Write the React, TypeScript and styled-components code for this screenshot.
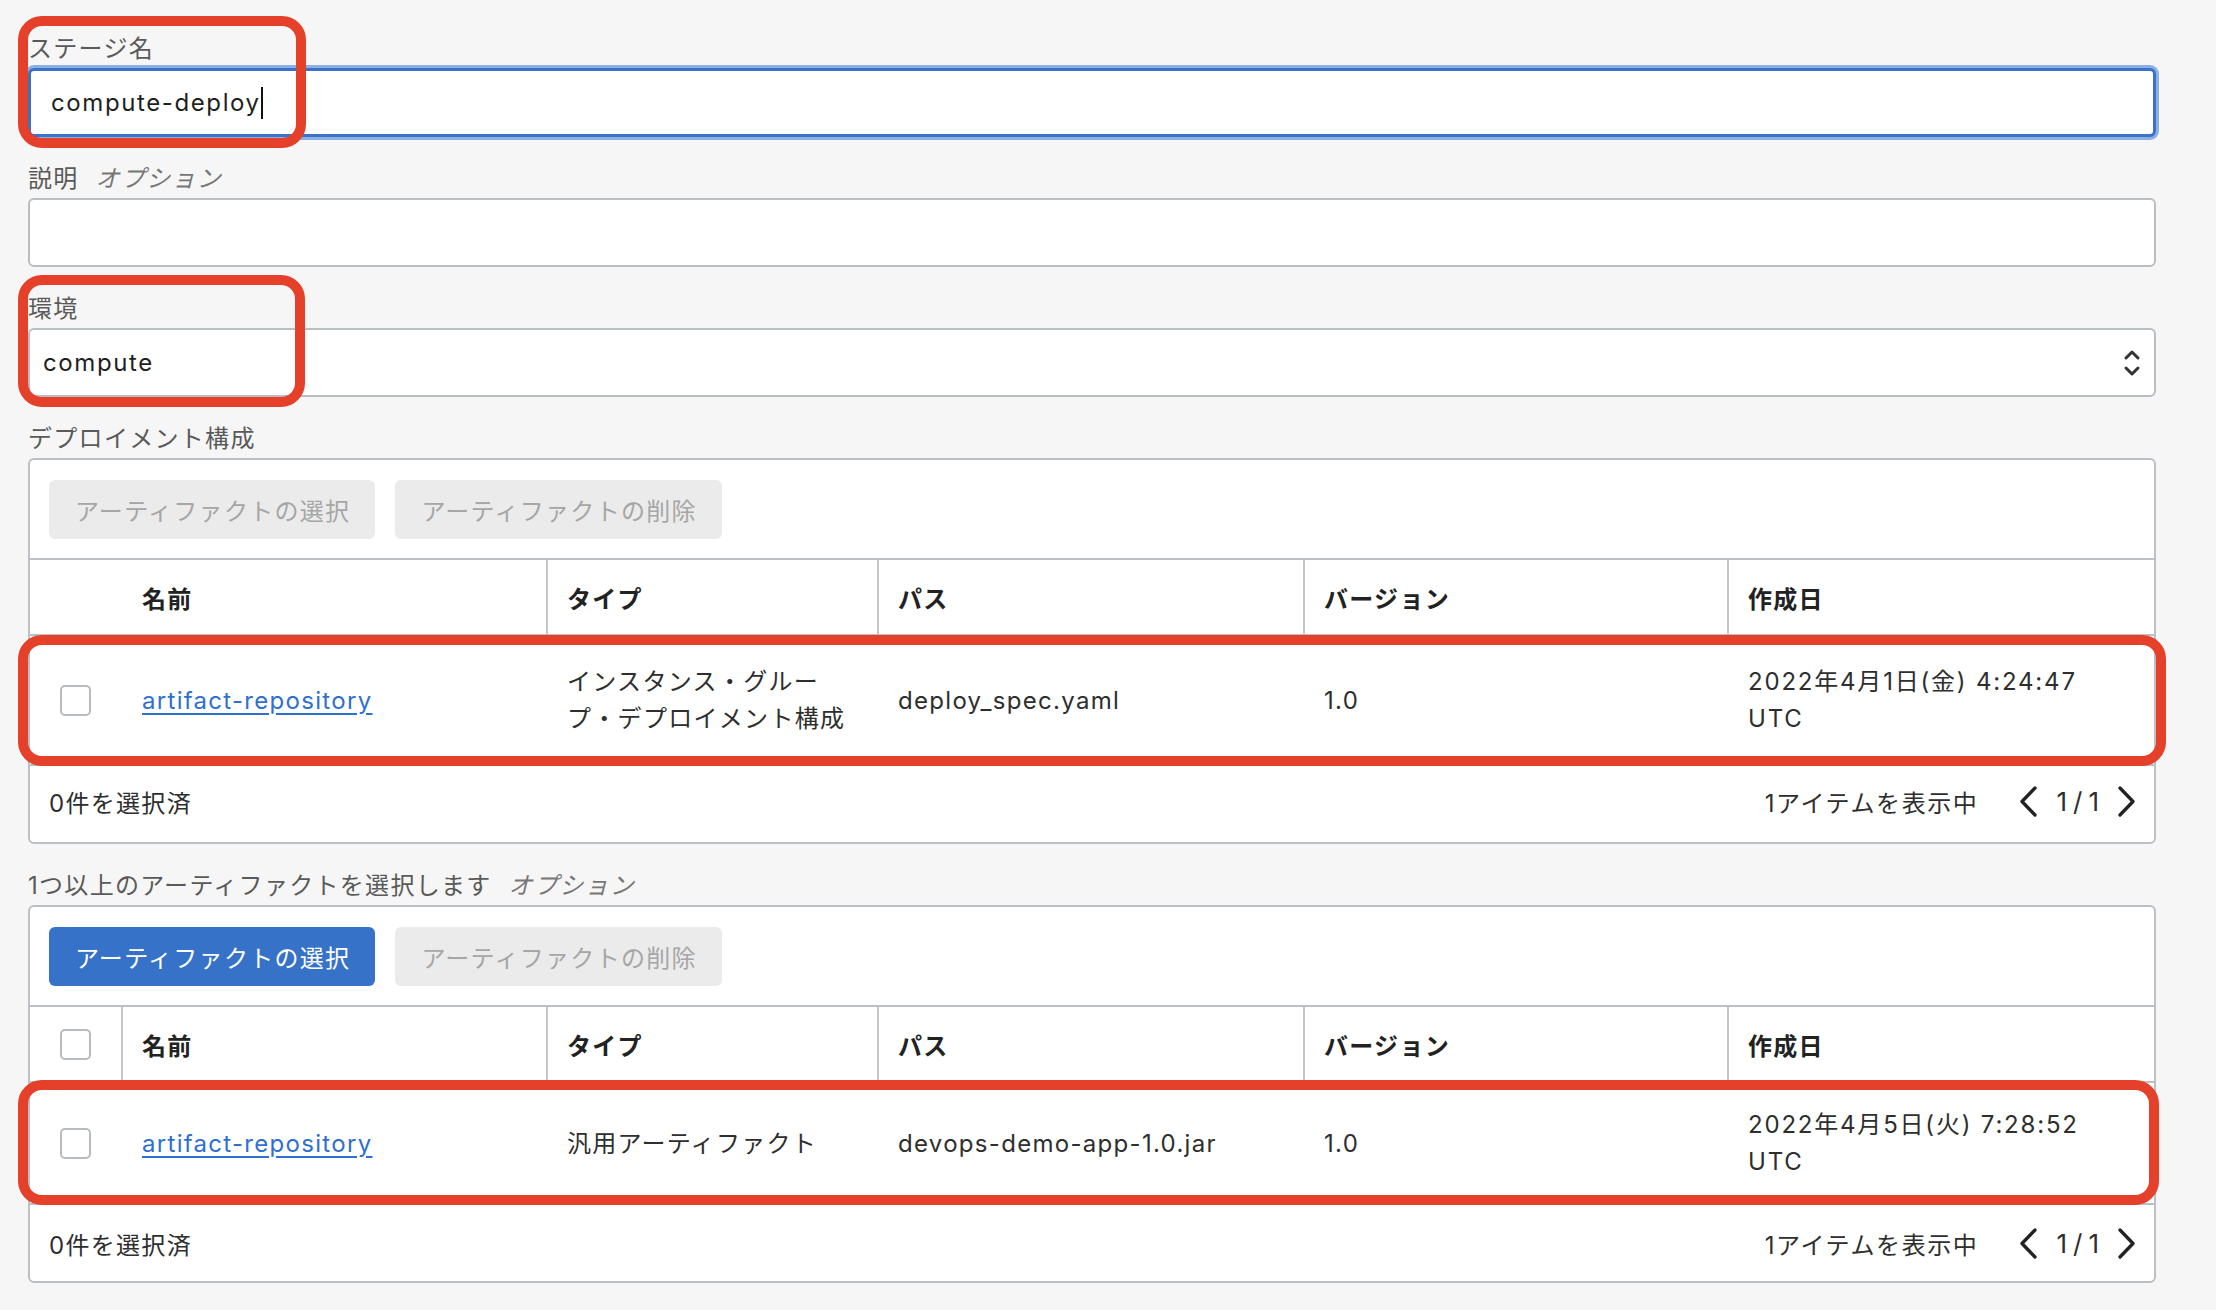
import React from "react";
import styled, { createGlobalStyle, css } from "styled-components";

const GlobalStyle = createGlobalStyle`
  html, body {
    margin: 0;
    padding: 0;
    background: #f6f6f6;
  }
  body {
    font-family: Inter, "Noto Sans CJK JP", "Noto Sans", sans-serif;
    color: #2b2b2b;
  }
  * { box-sizing: border-box; }
`;

const Page = styled.div`
  min-height: 1310px;
  padding: 34px 60px 0 28px;
  display: flex;
  flex-direction: column;
  gap: 27px;
  font-size: 24px;
  letter-spacing: 1.3px;
`;

const Field = styled.div`
  position: relative;
  display: flex;
  flex-direction: column;
  gap: 4px;
`;

const Label = styled.div`
  height: 30px;
  line-height: 30px;
  color: #5a5a5a;
  display: flex;
  gap: 17px;
  white-space: nowrap;
`;

const Optional = styled.span`
  font-style: italic;
  color: #777;
`;

const Control = styled.div<{ $focused?: boolean; $pad?: number }>`
  height: 69px;
  background: #fff;
  border: 2px solid #babec2;
  border-radius: 6px;
  display: flex;
  align-items: center;
  justify-content: space-between;
  padding: 0 12px 0 ${(p) => p.$pad ?? 19}px;
  color: #1f1f1f;
  ${(p) =>
    p.$focused &&
    css`
      border: 3px solid #3a72c9;
      box-shadow: 0 0 0 3px #8db0e4;
      padding-left: ${(p.$pad ?? 19) - 1}px;
    `}
`;

const Value = styled.span`
  display: inline-flex;
  align-items: center;
  letter-spacing: 1.6px;
`;

const Caret = styled.span`
  display: inline-block;
  width: 2px;
  height: 32px;
  background: #111;
`;

const Annotation = styled.div<{
  $top: number;
  $left: number;
  $right?: number;
  $bottom?: number;
  $width?: number;
  $height?: number;
}>`
  position: absolute;
  top: ${(p) => p.$top}px;
  left: ${(p) => p.$left}px;
  ${(p) => (p.$right !== undefined ? `right: ${p.$right}px;` : "")}
  ${(p) => (p.$bottom !== undefined ? `bottom: ${p.$bottom}px;` : "")}
  ${(p) => (p.$width !== undefined ? `width: ${p.$width}px;` : "")}
  ${(p) => (p.$height !== undefined ? `height: ${p.$height}px;` : "")}
  border: 10px solid #e5402a;
  border-radius: 24px;
  pointer-events: none;
  z-index: 2;
`;

const Card = styled.div`
  background: #fff;
  border: 2px solid #bcc0c4;
  border-radius: 6px;
`;

const Toolbar = styled.div`
  display: flex;
  gap: 20px;
  padding: 20px 19px 19px;
  border-bottom: 2px solid #bcc0c4;
`;

const Button = styled.button<{ $primary?: boolean }>`
  height: 59px;
  padding: 0 25px 0 26px;
  border: none;
  border-radius: 6px;
  font: inherit;
  letter-spacing: inherit;
  background: ${(p) => (p.$primary ? "#3672c8" : "#ebebeb")};
  color: ${(p) => (p.$primary ? "#ffffff" : "#a6a6a6")};
  cursor: ${(p) => (p.$primary ? "pointer" : "default")};
`;

const COLS = "91px 425px 331px 426px 424px 1fr";

const HeaderRow = styled.div`
  display: grid;
  grid-template-columns: ${COLS};
  height: 76px;
  border-bottom: 2px solid #bcc0c4;
`;

const HeadCell = styled.div<{ $divider?: boolean; $center?: boolean }>`
  display: flex;
  align-items: center;
  justify-content: ${(p) => (p.$center ? "center" : "flex-start")};
  padding: ${(p) => (p.$center ? "0" : "0 20px 0 21px")};
  font-weight: 700;
  color: #222;
  ${(p) => p.$divider && "box-shadow: inset 2px 0 0 #c3c6c9;"}
`;

const DataRow = styled.div<{ $height: number }>`
  position: relative;
  display: grid;
  grid-template-columns: ${COLS};
  height: ${(p) => p.$height}px;
  border-bottom: 2px solid #bcc0c4;
`;

const Cell = styled.div<{ $center?: boolean }>`
  display: flex;
  align-items: center;
  justify-content: ${(p) => (p.$center ? "center" : "flex-start")};
  padding: ${(p) => (p.$center ? "0" : "0 24px 0 21px")};
  line-height: 37px;
  color: #2e2e2e;
`;

const DateText = styled.span`
  max-width: 345px;
  letter-spacing: 1.8px;
`;

const Checkbox = styled.span`
  display: inline-block;
  width: 31px;
  height: 31px;
  border: 2px solid #b7bbbf;
  border-radius: 5px;
  background: #fff;
`;

const Link = styled.a`
  color: #2f6fd0;
  text-decoration: underline;
  text-underline-offset: 4px;
  text-decoration-thickness: 2px;
  cursor: pointer;
`;

const Footer = styled.div<{ $lift?: number }>`
  height: 76px;
  display: flex;
  align-items: center;
  justify-content: space-between;
  padding: 0 17px ${(p) => p.$lift ?? 0}px 19px;
  color: #2e2e2e;
`;

const Pager = styled.div`
  display: flex;
  align-items: center;
`;

const PagerText = styled.span`
  margin-right: 40px;
  letter-spacing: 1.6px;
`;

const PageNum = styled.span`
  margin: 0 12px 0 18px;
  font-size: 26px;
  letter-spacing: 6px;
`;

const Chevron = ({ dir }: { dir: "left" | "right" }) => (
  <svg width="20" height="31" viewBox="0 0 20 31" aria-hidden>
    <polyline
      points={dir === "left" ? "17,2 4,15.5 17,29" : "3,2 16,15.5 3,29"}
      fill="none"
      stroke="#222"
      strokeWidth="3.3"
      strokeLinecap="round"
      strokeLinejoin="round"
    />
  </svg>
);

const UpDown = () => (
  <svg width="20" height="32" viewBox="0 0 20 32" aria-hidden>
    <polyline points="4,11 10,5 16,11" fill="none" stroke="#333" strokeWidth="3" strokeLinecap="round" strokeLinejoin="round" />
    <polyline points="4,21 10,27 16,21" fill="none" stroke="#333" strokeWidth="3" strokeLinecap="round" strokeLinejoin="round" />
  </svg>
);

type Artifact = {
  name: string;
  type: string;
  path: string;
  version: string;
  created: string;
};

type TableProps = {
  rows: Artifact[];
  canAdd?: boolean;
  headerCheckbox?: boolean;
  rowHeight: number;
  footerLift?: number;
  mark: { top: number; bottom: number; left: number; right: number };
};

const ArtifactTable = ({ rows, canAdd, headerCheckbox, rowHeight, footerLift, mark }: TableProps) => (
  <Card>
    <Toolbar>
      <Button $primary={canAdd}>アーティファクトの選択</Button>
      <Button>アーティファクトの削除</Button>
    </Toolbar>
    <HeaderRow>
      <HeadCell $center>{headerCheckbox && <Checkbox />}</HeadCell>
      <HeadCell $divider={headerCheckbox}>名前</HeadCell>
      <HeadCell $divider>タイプ</HeadCell>
      <HeadCell $divider>パス</HeadCell>
      <HeadCell $divider>バージョン</HeadCell>
      <HeadCell $divider>作成日</HeadCell>
    </HeaderRow>
    {rows.map((r) => (
      <DataRow key={r.path} $height={rowHeight}>
        <Cell $center>
          <Checkbox />
        </Cell>
        <Cell>
          <Link>{r.name}</Link>
        </Cell>
        <Cell>{r.type}</Cell>
        <Cell>{r.path}</Cell>
        <Cell>{r.version}</Cell>
        <Cell>
          <DateText>{r.created}</DateText>
        </Cell>
        <Annotation $top={mark.top} $bottom={mark.bottom} $left={mark.left} $right={mark.right} />
      </DataRow>
    ))}
    <Footer $lift={footerLift}>
      <span>0件を選択済</span>
      <Pager>
        <PagerText>1アイテムを表示中</PagerText>
        <Chevron dir="left" />
        <PageNum>1/1</PageNum>
        <Chevron dir="right" />
      </Pager>
    </Footer>
  </Card>
);

export default function App() {
  return (
    <>
      <GlobalStyle />
      <Page>
        <Field>
          <Label>ステージ名</Label>
          <Control $focused $pad={21}>
            <Value>
              compute-deploy
              <Caret />
            </Value>
          </Control>
          <Annotation $top={-18} $left={-10} $width={288} $height={132} />
        </Field>

        <Field>
          <Label>
            説明<Optional>オプション</Optional>
          </Label>
          <Control />
        </Field>

        <Field>
          <Label>環境</Label>
          <Control $pad={13}>
            <Value>compute</Value>
            <UpDown />
          </Control>
          <Annotation $top={-19} $left={-10} $width={287} $height={132} />
        </Field>

        <Field>
          <Label>デプロイメント構成</Label>
          <ArtifactTable
            rows={[
              {
                name: "artifact-repository",
                type: "インスタンス・グループ・デプロイメント構成",
                path: "deploy_spec.yaml",
                version: "1.0",
                created: "2022年4月1日(金) 4:24:47 UTC",
              },
            ]}
            rowHeight={130}
            footerLift={6}
            mark={{ top: -1, bottom: -2, left: -12, right: -12 }}
          />
        </Field>

        <Field>
          <Label>
            1つ以上のアーティファクトを選択します<Optional>オプション</Optional>
          </Label>
          <ArtifactTable
            canAdd
            headerCheckbox
            rows={[
              {
                name: "artifact-repository",
                type: "汎用アーティファクト",
                path: "devops-demo-app-1.0.jar",
                version: "1.0",
                created: "2022年4月5日(火) 7:28:52 UTC",
              },
            ]}
            rowHeight={122}
            mark={{ top: -3, bottom: -2, left: -12, right: -5 }}
          />
        </Field>
      </Page>
    </>
  );
}
